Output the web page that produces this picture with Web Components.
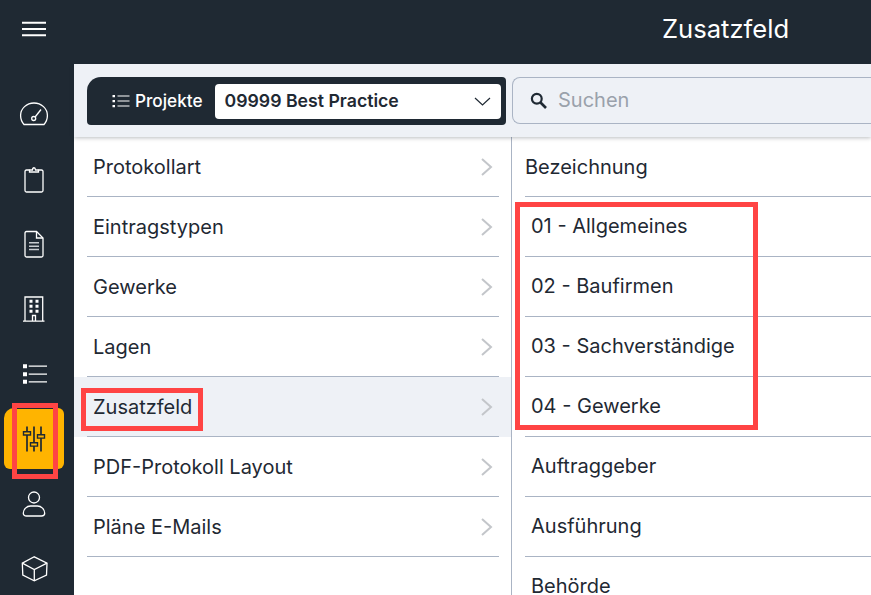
<!DOCTYPE html>
<html lang="de">
<head>
<meta charset="utf-8">
<title>Zusatzfeld</title>
<style>
  html, body { margin: 0; height: 100%; overflow: hidden; background: #fff; }
  body { font-family: Inter, "Liberation Sans", sans-serif; color: #1f2933; }
</style>
</head>
<body>
<app-shell>
  <side-nav slot="nav">
    <nav-icon slot="menu" name="menu"></nav-icon>
    <nav-icon name="gauge"></nav-icon>
    <nav-icon name="clipboard"></nav-icon>
    <nav-icon name="doc"></nav-icon>
    <nav-icon name="building"></nav-icon>
    <nav-icon name="list"></nav-icon>
    <nav-icon name="sliders" active></nav-icon>
    <nav-icon name="user"></nav-icon>
    <nav-icon name="cube"></nav-icon>
  </side-nav>
  <top-bar slot="top">Zusatzfeld</top-bar>
  <tool-bar slot="tools"></tool-bar>
  <list-col slot="left" divider>
    <list-row chevron>Protokollart</list-row>
    <list-row chevron>Eintragstypen</list-row>
    <list-row chevron>Gewerke</list-row>
    <list-row chevron>Lagen</list-row>
    <list-row chevron selected>Zusatzfeld</list-row>
    <list-row chevron>PDF-Protokoll Layout</list-row>
    <list-row chevron>Pläne E-Mails</list-row>
  </list-col>
  <list-col slot="right" wide>
    <list-row>Bezeichnung</list-row>
    <list-row indent>01 - Allgemeines</list-row>
    <list-row indent>02 - Baufirmen</list-row>
    <list-row indent>03 - Sachverständige</list-row>
    <list-row indent>04 - Gewerke</list-row>
    <list-row indent>Auftraggeber</list-row>
    <list-row indent>Ausführung</list-row>
    <list-row indent>Behörde</list-row>
  </list-col>
  <mark-box slot="marks" style="left:12px;top:403px;width:46px;height:76px;box-shadow:inset 0 1px 0 #1f2933"></mark-box>
  <mark-box slot="marks" style="left:81px;top:388px;width:122px;height:43px"></mark-box>
  <mark-box slot="marks" style="left:515px;top:202px;width:243px;height:228px"></mark-box>
</app-shell>

<script>
// icon paths, all on a 28 box
const ICONS = {
  menu: '<path d="M2 7.700h24M2 14h24M2 20.300h24" stroke-width="2"/>',
  gauge: '<path d="M4 24.500h20c2.200-2.500 3.400-5.400 3.400-9C27.400 8.500 21.400 3 14 3S.6 8.500.6 15.500c0 3.600 1.200 6.500 3.400 9z"/><circle cx="13.700" cy="18.500" r="2"/><path d="M15.100 17l5.900-7.500"/>',
  clipboard: '<path d="M9.500 5H6.500C5.500 5 5 5.500 5 6.500v19c0 1 .5 1.500 1.500 1.500h15c1 0 1.500-.5 1.500-1.500v-19c0-1-.5-1.500-1.500-1.500h-3"/><path d="M9.500 7V5h3c.2-3 2.800-3 3 0h3v2z"/>',
  doc: '<path d="M16.500 1.500H6.500C5.500 1.500 5 2 5 3v22.500c0 1 .5 1.500 1.500 1.500h15c1 0 1.500-.5 1.500-1.500V8z"/><path d="M16.500 1.500V8H23"/><path d="M9 12.800h10M9 16.200h10M9 19.500h10" stroke="#c8ccd0" stroke-width="1.500"/>',
  building: '<path d="M5 26V2h17.700v24M3 26.200h21.500"/><path d="M12.500 26v-5.500h3V26"/><path d="M9.500 6.200h3M15.500 6.200h3M9.500 11.200h3M15.500 11.200h3M9.500 16.200h3M15.500 16.200h3" stroke-width="3"/>',
  list: '<path d="M8.700 6.200H27M8.700 14.200H27M8.700 21.800H27"/><path d="M3 4.200h4v4H3zM3 12.200h4v4H3zM3 19.800h4v4H3z" fill="currentColor" stroke="none"/>',
  sliders: '<path d="M7 1.500v25M14 1.500v25M21 1.500v25" stroke-width="1.700"/><path d="M3.500 6.700h7v3.300h-7zM10.500 17.800h7v3.300h-7zM17.500 9.800h7v3.300h-7z" fill="#ffb400" stroke-width="1.400"/>',
  user: '<circle cx="14" cy="7.500" r="5.500"/><path d="M6.500 26h15c2 0 3.200-1 3.200-2.700 0-4-3.500-7.300-7.200-7.300h-7c-3.700 0-7.200 3.300-7.200 7.300C3.300 25 4.500 26 6.500 26z"/>',
  cube: '<path d="M14.300 1.800L27 8.200 26.500 20l-12.200 5.800L2.800 20 2.300 8.200z"/><path d="M2.300 8.200l12 6.300L27 8.200M14.300 14.500v11.300"/>'
};

class AppShell extends HTMLElement {
  constructor() {
    super();
    this.attachShadow({ mode: 'open' }).innerHTML = `
      <style>
        :host { display: grid; position: relative; width: 871px; height: 595px; overflow: hidden;
          grid-template-columns: 74px 1fr; grid-template-rows: 64px 73px 1fr; }
        .nav { grid-row: 1 / 4; display: block; min-height: 0; }
        .cols { display: flex; min-width: 0; min-height: 0; overflow: hidden; }
      </style>
      <div class="nav"><slot name="nav"></slot></div>
      <slot name="top"></slot>
      <slot name="tools"></slot>
      <div class="cols"><slot name="left"></slot><slot name="right"></slot></div>
      <slot name="marks"></slot>`;
  }
}

class SideNav extends HTMLElement {
  constructor() {
    super();
    this.attachShadow({ mode: 'open' }).innerHTML = `
      <style>
        :host { display: flex; flex-direction: column; height: 595px; background: #1f2933; color: #fff; overflow: hidden; }
        .menu { height: 81px; flex: none; }
        .items { display: flex; flex-direction: column; }
      </style>
      <div class="menu"><slot name="menu"></slot></div>
      <div class="items"><slot></slot></div>`;
  }
}

class NavIcon extends HTMLElement {
  constructor() {
    super();
    this.attachShadow({ mode: 'open' });
  }
  connectedCallback() {
    const name = this.getAttribute('name');
    this.shadowRoot.innerHTML = `
      <style>
        :host { display: flex; align-items: center; justify-content: center; width: 74px; height: 65px; box-sizing: border-box; padding-right: 6px; }
        :host([name=menu]) { height: 58px; }
        :host([active]) { color: #1f2933; }
        .tile { display: flex; align-items: center; justify-content: center; width: 60px; height: 61px; border-radius: 10px 6px 6px 6px; flex: none; }
        :host([active]) .tile { background: #ffb400; }
        svg { width: 28px; height: 28px; fill: none; stroke: currentColor; stroke-width: 1.300; display: block; overflow: visible; }
      </style>
      <div class="tile"><svg viewBox="0 0 28 28">${ICONS[name] || ''}</svg></div>`;
  }
}

class TopBar extends HTMLElement {
  constructor() {
    super();
    this.attachShadow({ mode: 'open' }).innerHTML = `
      <style>
        :host { display: block; background: #1f2933; color: #fff; font-size: 25.600px; line-height: 58px; padding-left: 588px; white-space: nowrap; overflow: hidden; }
      </style>
      <slot></slot>`;
  }
}

class ToolBar extends HTMLElement {
  constructor() {
    super();
    this.attachShadow({ mode: 'open' }).innerHTML = `
      <style>
        :host { display: flex; gap: 6px; position: relative; z-index: 1; box-sizing: border-box; padding: 13px 0 12px 13px; background: #eef1f6; box-shadow: 0 1px 4px rgba(31,41,51,.3); min-width: 0; }
        .group { flex: none; display: flex; align-items: center; width: 419px; box-sizing: border-box; height: 48px; background: #1f2933; border-radius: 14px 4px 4px 4px; padding: 0 5px 0 25px; color: #fff; font-size: 17.200px; font-weight: 500; }
        .group svg { width: 18px; height: 14px; margin-right: 5px; fill: none; stroke: #fff; stroke-width: 1.200; }
        .label { margin-right: 12px; padding-bottom: 2px; }
        .select { flex: 1; display: flex; align-items: center; justify-content: space-between; height: 35px; background: #fff; border-radius: 4px; color: #1f2933; font-size: 17.700px; font-weight: 600; padding: 0 10px; }
        .select span { padding-bottom: 2px; }
        .select svg { width: 17px; height: 9px; margin: 0; stroke: #1f2933; }
        .search { flex: 1; display: flex; align-items: center; height: 47px; border: 1px solid #aab4c4; border-right: 0; border-radius: 8px 0 0 8px; box-sizing: border-box; padding-left: 17px; color: #9aa1ab; font-size: 20px; font-weight: 370; }
        .search span { padding-bottom: 2px; }
        .search svg { width: 17px; height: 17px; margin-right: 11px; fill: none; stroke: #1f2933; stroke-width: 2.200; }
      </style>
      <div class="group">
        <svg viewBox="0 0 18 14"><path d="M5.500 2h12M5.500 7h12M5.500 12h12"/><path d="M.5 1h2.500v2.200H.5zM.5 6h2.500v2.200H.5zM.5 11h2.500v2.200H.5z" fill="#fff" stroke="none"/></svg>
        <span class="label">Projekte</span>
        <div class="select"><span>09999 Best Practice</span><svg viewBox="0 0 17 9"><path d="M1 1l7.500 7L16 1"/></svg></div>
      </div>
      <div class="search">
        <svg viewBox="0 0 17 17"><circle cx="6.800" cy="6.800" r="4.900"/><path d="M10.500 10.500l5.500 5.500" stroke-width="2.600"/></svg>
        <span>Suchen</span>
      </div>`;
  }
}

class ListCol extends HTMLElement {
  constructor() {
    super();
    this.attachShadow({ mode: 'open' }).innerHTML = `
      <style>
        :host { display: block; box-sizing: border-box; width: 438px; flex: none; height: 458px; overflow: hidden; }
        :host([divider]) { border-right: 1px solid #aab4c4; }
        :host([wide]) { width: 359px; }
      </style>
      <slot></slot>`;
  }
}

class ListRow extends HTMLElement {
  constructor() {
    super();
    this.attachShadow({ mode: 'open' }).innerHTML = `
      <style>
        :host { display: block; height: 60px; box-sizing: border-box; padding: 0 0 0 13px; font-size: 20px; font-weight: 370; color: #1f2933; }
        :host([chevron]) { padding-right: 12px; }
        .text { line-height: 18px; white-space: nowrap; }
        :host([indent]) .text { padding-left: 6px; padding-bottom: 2px; }
        :host([selected]) { background: #eef1f6; }
        .inner { display: flex; align-items: center; justify-content: space-between; height: 60px; box-sizing: border-box; border-bottom: 1px solid #aab4c4; }
        :host([chevron]) .inner { padding: 0 6px; }
        svg { width: 13px; height: 20px; fill: none; stroke: #c3c6ca; stroke-width: 2; }
      </style>
      <div class="inner"><span class="text"><slot></slot></span></div>`;
  }
  connectedCallback() {
    if (this.hasAttribute('chevron') && !this.shadowRoot.querySelector('svg')) {
      this.shadowRoot.querySelector('.inner').insertAdjacentHTML('beforeend',
        '<svg viewBox="0 0 13 20"><path d="M2 2l9 8-9 8"/></svg>');
    }
  }
}

// red annotation frame over the screenshot
class MarkBox extends HTMLElement {
  constructor() {
    super();
    this.attachShadow({ mode: 'open' }).innerHTML = `
      <style>
        :host { display: block; position: absolute; box-sizing: border-box; border: 5px solid #ff4444; z-index: 5; }
      </style>`;
  }
}

customElements.define('app-shell', AppShell);
customElements.define('side-nav', SideNav);
customElements.define('nav-icon', NavIcon);
customElements.define('top-bar', TopBar);
customElements.define('tool-bar', ToolBar);
customElements.define('list-col', ListCol);
customElements.define('list-row', ListRow);
customElements.define('mark-box', MarkBox);
</script>
</body>
</html>
